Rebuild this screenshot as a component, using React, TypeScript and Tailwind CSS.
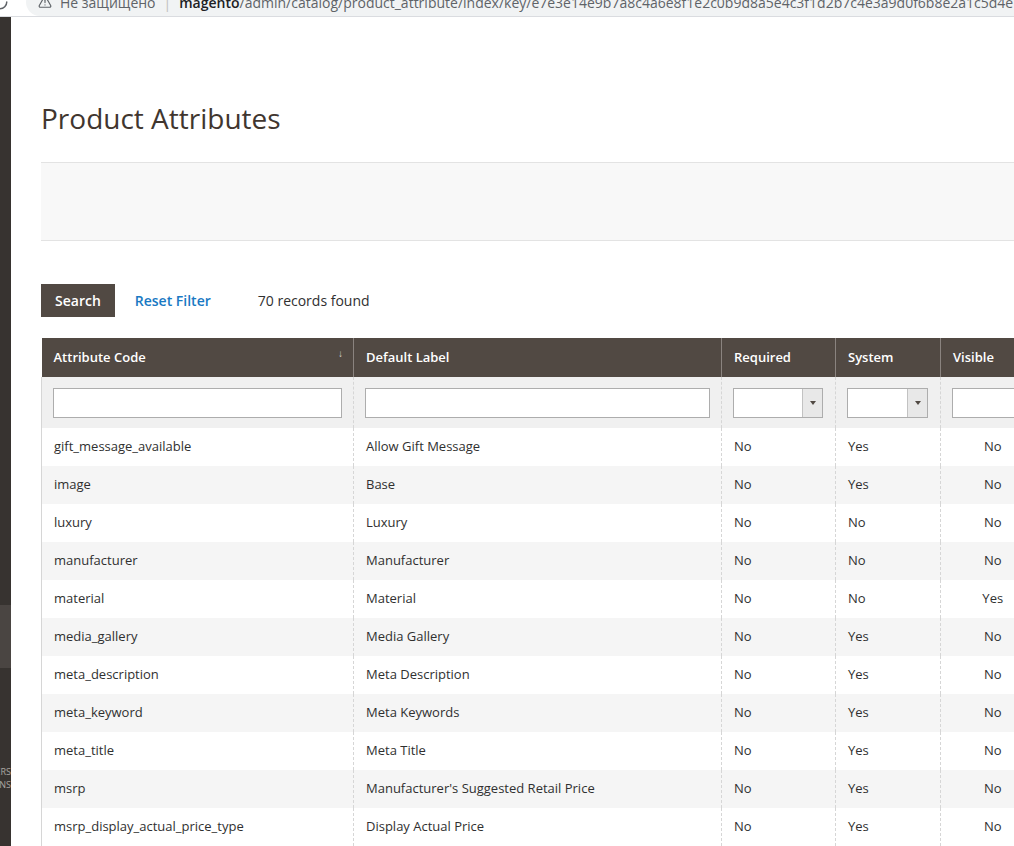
import { RotateCw, TriangleAlert } from 'lucide-react';

type Row = { code: string; label: string; required: string; system: string; visible: string };

const rows: Row[] = [
  { code: 'gift_message_available', label: 'Allow Gift Message', required: 'No', system: 'Yes', visible: 'No' },
  { code: 'image', label: 'Base', required: 'No', system: 'Yes', visible: 'No' },
  { code: 'luxury', label: 'Luxury', required: 'No', system: 'No', visible: 'No' },
  { code: 'manufacturer', label: 'Manufacturer', required: 'No', system: 'No', visible: 'No' },
  { code: 'material', label: 'Material', required: 'No', system: 'No', visible: 'Yes' },
  { code: 'media_gallery', label: 'Media Gallery', required: 'No', system: 'Yes', visible: 'No' },
  { code: 'meta_description', label: 'Meta Description', required: 'No', system: 'Yes', visible: 'No' },
  { code: 'meta_keyword', label: 'Meta Keywords', required: 'No', system: 'Yes', visible: 'No' },
  { code: 'meta_title', label: 'Meta Title', required: 'No', system: 'Yes', visible: 'No' },
  { code: 'msrp', label: "Manufacturer's Suggested Retail Price", required: 'No', system: 'Yes', visible: 'No' },
  { code: 'msrp_display_actual_price_type', label: 'Display Actual Price', required: 'No', system: 'Yes', visible: 'No' },
];

function SelectBox() {
  return (
    <div className="flex h-[30px] border border-[#adadad] bg-white">
      <div className="flex-1" />
      <div className="w-[20px] border-l border-[#c2c2c2] bg-[#e8e8e8] flex items-center justify-center">
        <span className="block w-0 h-0 border-l-[3px] border-r-[3px] border-t-[4px] border-l-transparent border-r-transparent border-t-[#514943]" />
      </div>
    </div>
  );
}

export default function App() {
  return (
    <div className="w-[1014px] h-[846px] overflow-hidden bg-white flex flex-col font-['Open_Sans',sans-serif] text-[#303030]">
      {/* browser chrome, cut off at the top */}
      <div className="h-[17px] shrink-0 overflow-hidden border-b border-[#dadce0] bg-white">
        <div className="-mt-[13px] h-[30px] flex items-center">
          <RotateCw size={18} className="text-[#5f6368] -ml-[9px] shrink-0" />
          <div className="ml-[17px] flex-1 h-[28px] rounded-l-full bg-[#f1f3f4] flex items-center pl-[12px] gap-[8px] text-[14px] whitespace-nowrap overflow-hidden">
            <TriangleAlert size={14} className="text-[#5f6368] shrink-0" />
            <span className="text-[#5f6368]">Не защищено</span>
            <span className="text-[#c0c0c0]">|</span>
            <span>
              <span className="text-[#202124] font-semibold">magento</span>
              <span className="text-[#5f6368]">/admin/catalog/product_attribute/index/key/e7e3e14e9b7a8c4a6e8f1e2c0b9d8a5e4c3f1d2b7c4e3a9d0f6b8e2a1c5d4e7f9</span>
            </span>
          </div>
        </div>
      </div>

      <div className="flex flex-1 min-h-0">
        {/* admin sidebar */}
        <div className="w-[11px] shrink-0 bg-[#373330] flex flex-col overflow-hidden">
          <div className="h-[588px] shrink-0" />
          <div className="h-[63px] shrink-0 bg-[#4a4542]" />
          <div className="pt-[98px] flex flex-col items-end gap-[2px] text-[9px] leading-[11px] text-[#aaa6a0] whitespace-nowrap">
            <span className="block">PARTNERS</span>
            <span className="block">EXTENSIONS</span>
          </div>
        </div>

        {/* page */}
        <div className="flex-1 min-w-0 overflow-hidden pl-[30px]">
          <h1 className="pt-[83px] text-[28px] leading-[36px] text-[#41362f] font-normal">Product Attributes</h1>

          <div className="mt-[26px] h-[79px] bg-[#f8f8f8] border-t border-b border-[#e3e3e3]" />

          <div className="mt-[43px] flex items-center">
            <button className="h-[33px] px-[14px] bg-[#514943] text-white text-[14px] font-semibold">Search</button>
            <span className="ml-[20px] text-[14px] font-semibold text-[#1979c3]">Reset Filter</span>
            <span className="ml-[47px] text-[14px] text-[#303030]">70 records found</span>
          </div>

          <table className="mt-[21px] table-fixed border-collapse w-[1003px] text-[13px]">
            <colgroup>
              <col className="w-[312px]" />
              <col className="w-[368px]" />
              <col className="w-[114px]" />
              <col className="w-[105px]" />
              <col className="w-[104px]" />
            </colgroup>
            <thead>
              <tr className="h-[39px] bg-[#514943] text-white text-left">
                <th className="pl-3 pr-[10px] font-semibold">
                  <div className="flex items-center justify-between">
                    <span>Attribute Code</span>
                    <span className="text-[10px] -mt-[8px] text-[#d8d3cf]">↓</span>
                  </div>
                </th>
                <th className="px-3 font-semibold border-l border-[#8a837f]">Default Label</th>
                <th className="px-3 font-semibold border-l border-[#8a837f]">Required</th>
                <th className="px-3 font-semibold border-l border-[#8a837f]">System</th>
                <th className="px-3 font-semibold border-l border-[#8a837f]">Visible</th>
              </tr>
              <tr className="h-[51px] bg-[#f0f0f0]">
                <td className="pl-[11px] pr-[11px] border-l border-[#d6d6d6]">
                  <div className="h-[30px] border border-[#adadad] bg-white" />
                </td>
                <td className="pl-[11px] pr-[11px] border-l border-dashed border-[#d6d6d6]">
                  <div className="h-[30px] border border-[#adadad] bg-white" />
                </td>
                <td className="pl-[11px] pr-[12px] border-l border-dashed border-[#d6d6d6]">
                  <SelectBox />
                </td>
                <td className="pl-[11px] pr-[12px] border-l border-dashed border-[#d6d6d6]">
                  <SelectBox />
                </td>
                <td className="pl-[11px] pr-[11px] border-l border-dashed border-[#d6d6d6]">
                  <div className="h-[30px] border border-[#adadad] bg-white" />
                </td>
              </tr>
            </thead>
            <tbody>
              {rows.map((r, i) => (
                <tr key={r.code} className={`h-[38px] ${i % 2 === 1 ? 'bg-[#f5f5f5]' : 'bg-white'}`}>
                  <td className="px-3 border-l border-[#d6d6d6] whitespace-nowrap">{r.code}</td>
                  <td className="px-3 border-l border-dashed border-[#d6d6d6] whitespace-nowrap">{r.label}</td>
                  <td className="px-3 border-l border-dashed border-[#d6d6d6]">{r.required}</td>
                  <td className="px-3 border-l border-dashed border-[#d6d6d6]">{r.system}</td>
                  <td className="px-3 border-l border-dashed border-[#d6d6d6] text-center">{r.visible}</td>
                </tr>
              ))}
            </tbody>
          </table>
        </div>
      </div>
    </div>
  );
}
